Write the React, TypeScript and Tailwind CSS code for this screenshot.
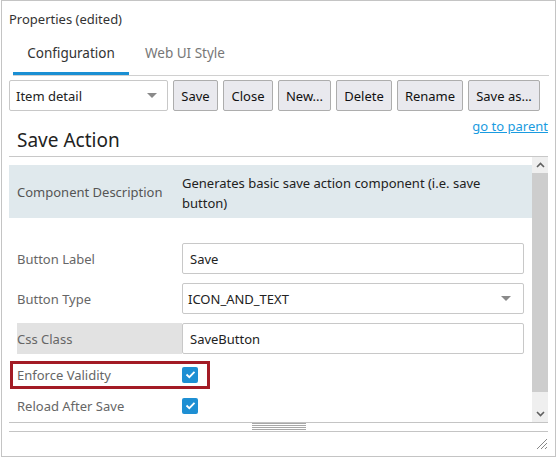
import React from "react";

const font = { fontFamily: '"Noto Sans", "Open Sans", sans-serif' };

function Chevron({ up }: { up?: boolean }) {
  return (
    <svg width="9" height="6" viewBox="0 0 9 6">
      <path
        d={up ? "M1 5 L4.5 1.5 L8 5" : "M1 1 L4.5 4.5 L8 1"}
        fill="none"
        stroke="#606060"
        strokeWidth="1.6"
      />
    </svg>
  );
}

function Check() {
  return (
    <div className="w-[16px] h-[16px] rounded-[2px] bg-[#1e8fd3] flex items-center justify-center">
      <svg width="11" height="9" viewBox="0 0 11 9">
        <path d="M1.5 4.5 L4.3 7.2 L9.5 1.8" fill="none" stroke="#fff" strokeWidth="1.8" />
      </svg>
    </div>
  );
}

function Caret() {
  return (
    <svg width="10" height="5" viewBox="0 0 10 5">
      <path d="M0 0 L10 0 L5 5 Z" fill="#8a8a8a" />
    </svg>
  );
}

const buttons: [string, string][] = [
  ["Save", "w-[45px]"],
  ["Close", "w-[50px]"],
  ["New...", "w-[53px]"],
  ["Delete", "w-[56px]"],
  ["Rename", "w-[66px]"],
  ["Save as...", "w-[72px]"],
];

export default function App() {
  return (
    <div
      className="ml-[1px] w-[555px] h-[457px] border border-[#c4c4c4] bg-white flex flex-col text-[#333]"
      style={font}
    >
      <div className="pl-[7px] pt-[9px] h-[31px] text-[13px] leading-[18px] text-[#333]">
        Properties (edited)
      </div>
      <div className="ml-[11px] mr-[6px] flex border-b border-[#d0d0d0] h-[44px]">
        <div className="w-[116px] flex items-center justify-center border-b-[3px] border-[#1a8fd3] text-[13.5px] text-[#333] pt-[2px]">
          Configuration
        </div>
        <div className="w-[112px] flex items-center justify-center text-[13.5px] text-[#777] pb-[1px]">
          Web UI Style
        </div>
      </div>
      <div className="mt-[4px] ml-[7px] flex gap-[5px] h-[31px]">
        <div className="w-[159px] border border-[#c8c8c8] rounded-[2px] flex items-center justify-between pl-[6px] pr-[10px] text-[13px] text-[#222]">
          <span className="pt-[3px]">Item detail</span>
          <Caret />
        </div>
        {buttons.map(([t, w]) => (
          <div
            key={t}
            className={`${w} border border-[#adadad] rounded-[2px] bg-[#e9e9ee] flex items-center justify-center pt-[3px] text-[13px] text-[#111]`}
          >
            {t}
          </div>
        ))}
      </div>
      <div className="mt-[7px] mr-[7px] flex justify-end text-[13px] leading-[16px]">
        <span className="text-[#1a9be0] underline">go to parent</span>
      </div>
      <div className="mx-[7px] -mt-[7px] border-b border-[#c8c8c8] pb-[3px] pl-[8px] text-[19px] leading-[26px] text-[#222]">
        Save Action
      </div>
      <div className="mx-[7px] h-[265px] flex">
        <div className="flex-1 overflow-hidden">
          <div className="mt-[8px] h-[53px] bg-[#e0e9ed] flex items-center pt-[2px] text-[13px]">
            <div className="w-[173px] pl-[8px] text-[#555]">Component Description</div>
            <div className="flex-1 leading-[20px] text-[#222] pr-[8px]">
              Generates basic save action component (i.e. save button)
            </div>
          </div>
          <div className="mt-[25px] pl-[8px] flex flex-col gap-[9px] text-[13px]">
            <div className="flex h-[31px]">
              <div className="w-[165px] flex items-center pt-[2px] text-[#666]">Button Label</div>
              <div className="w-[342px] border border-[#c8c8c8] rounded-[2px] flex items-center pl-[7px] pt-[3px] text-[13px] text-[#222]">
                Save
              </div>
            </div>
            <div className="flex h-[31px]">
              <div className="w-[165px] flex items-center pt-[2px] text-[#666]">Button Type</div>
              <div className="w-[342px] border border-[#c8c8c8] rounded-[2px] flex items-center justify-between pl-[5px] pr-[12px] text-[13px] text-[#222]">
                <span className="pt-[3px]">ICON_AND_TEXT</span>
                <Caret />
              </div>
            </div>
            <div className="flex h-[31px]">
              <div className="w-[165px] flex items-center pt-[2px] bg-[#e2e2e2] text-[#666]">Css Class</div>
              <div className="w-[342px] border border-[#c8c8c8] rounded-[2px] flex items-center pl-[7px] pt-[3px] text-[13px] text-[#222]">
                SaveButton
              </div>
            </div>
          </div>
          <div className="mt-[5px] pl-[8px] text-[13px]">
            <div className="relative flex h-[31px] items-center">
              <div className="w-[165px] pt-[2px] text-[#666]">Enforce Validity</div>
              <Check />
              <div className="absolute left-[-7px] top-[2px] w-[200px] h-[28px] border-[3px] border-[#a31b25]" />
            </div>
            <div className="flex h-[31px] items-center">
              <div className="w-[165px] pt-[2px] text-[#666]">Reload After Save</div>
              <Check />
            </div>
          </div>
        </div>
        <div className="w-[16px] flex flex-col bg-[#efefef]">
          <div className="h-[16px] flex items-center justify-center">
            <Chevron up />
          </div>
          <div className="h-[219px] bg-[#cdcdcd]" />
          <div className="flex-1 flex items-end justify-center pb-[5px]">
            <Chevron />
          </div>
        </div>
      </div>
      <div className="mx-[7px] h-[10px] border-y border-[#c4c4c4] flex justify-center">
        <div className="w-[54px] flex flex-col gap-[1px]">
          <div className="h-[1px] bg-[#a8a8a8]" />
          <div className="h-[1px] bg-[#a8a8a8]" />
          <div className="h-[1px] bg-[#a8a8a8]" />
          <div className="h-[1px] bg-[#a8a8a8]" />
        </div>
      </div>
      <div className="flex-1 flex items-end justify-end pr-[7px] pb-[6px]">
        <svg width="12" height="12" viewBox="0 0 12 12">
          <path d="M1 11 L11 1 M5 11 L11 5 M9 11 L11 9" stroke="#888" strokeWidth="1" />
        </svg>
      </div>
    </div>
  );
}
